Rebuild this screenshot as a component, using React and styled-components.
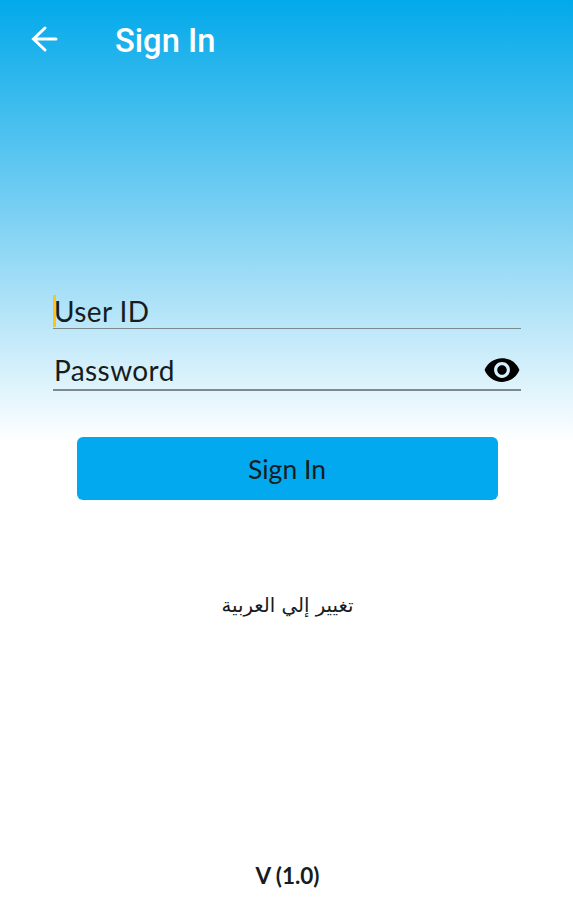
import React, { useState } from "react";
import styled, { createGlobalStyle } from "styled-components";

const colors = {
  primary: "#03a9ee",
  text: "#161c20",
  line: "#7d8b91",
  cursor: "#fcc419",
};

const GlobalStyle = createGlobalStyle`
  * {
    box-sizing: border-box;
  }
  body {
    margin: 0;
    background: white;
  }
`;

const Screen = styled.div`
  height: 900px;
  display: flex;
  flex-direction: column;
  align-items: center;
  overflow: hidden;
  background: linear-gradient(#02a9ea 0px, #7bd0f3 215px, #ffffff 442px);
  font-family: Lato, "Noto Sans", sans-serif;
  color: ${colors.text};
`;

const Header = styled.header`
  width: 100%;
  height: 80px;
  padding: 0 30px;
  display: flex;
  align-items: center;
  gap: 56px;
`;

const BackButton = styled.button`
  display: flex;
  padding: 0;
  background: none;
  border: none;
  color: white;
  cursor: pointer;
`;

const Title = styled.h1`
  margin: 0;
  padding-top: 2px;
  color: white;
  font-family: Roboto, sans-serif;
  font-size: 32.7px;
  font-weight: 500;
  line-height: 40px;
`;

const Form = styled.form`
  width: 468px;
  margin: 214px 0 0 1px;
  display: flex;
  flex-direction: column;
`;

const Field = styled.label`
  height: ${({ $height }) => $height}px;
  padding-top: ${({ $top }) => $top || 0}px;
  display: flex;
  align-items: center;
  border-bottom: ${({ $line }) => $line || 1}px solid ${colors.line};
`;

const Cursor = styled.span`
  width: 3px;
  height: 32px;
  margin-right: -3px;
  background: ${colors.cursor};
`;

const Input = styled.input`
  flex: 1;
  min-width: 0;
  padding: 0 0 0 1px;
  border: none;
  outline: none;
  background: none;
  font-family: inherit;
  font-size: 28px;
  letter-spacing: 0.4px;
  color: ${colors.text};
  &::placeholder {
    color: ${colors.text};
    opacity: 1;
  }
`;

const EyeButton = styled(BackButton)`
  color: black;
`;

const SubmitButton = styled.button`
  width: 421px;
  height: 63px;
  margin: 46px auto 0;
  padding: 0;
  border: none;
  border-radius: 6px;
  background: ${colors.primary};
  color: ${colors.text};
  font-family: inherit;
  font-size: 26.5px;
  cursor: pointer;
`;

const LanguageLink = styled.button`
  margin: 90px 0 0 2px;
  padding: 0;
  border: none;
  background: none;
  color: ${colors.text};
  font-family: "DejaVu Sans", sans-serif;
  font-size: 19.7px;
  line-height: 32px;
  cursor: pointer;
`;

const Version = styled.p`
  margin: auto 0 9px 2px;
  font-size: 22.5px;
  font-weight: 700;
  line-height: 30px;
`;

const App = () => {
  const [showPassword, setShowPassword] = useState(false);

  return (
    <>
      <GlobalStyle />
      <Screen>
        <Header>
          <BackButton aria-label="Back">
            <svg width="29" height="30" viewBox="0 0 29 30" fill="none" stroke="currentColor" strokeWidth="3" strokeLinecap="round">
              <path d="M26 14H4M15 3L3.5 14L15 25" />
            </svg>
          </BackButton>
          <Title>Sign In</Title>
        </Header>
        <Form onSubmit={(e) => e.preventDefault()}>
          <Field $height={35}>
            <Cursor />
            <Input placeholder="User ID" />
          </Field>
          <Field $height={62} $top={22} $line={2}>
            <Input type={showPassword ? "text" : "password"} placeholder="Password" />
            <EyeButton type="button" aria-label="Show password" onClick={() => setShowPassword(!showPassword)}>
              <svg width="38" height="38" viewBox="0 0 24 24" fill="currentColor">
                <path d="M12 4.5C7 4.5 2.73 7.61 1 12c1.73 4.39 6 7.5 11 7.5s9.27-3.11 11-7.5c-1.73-4.39-6-7.5-11-7.5zM12 17c-2.76 0-5-2.24-5-5s2.24-5 5-5 5 2.24 5 5-2.24 5-5 5zm0-8c-1.66 0-3 1.34-3 3s1.34 3 3 3 3-1.34 3-3-1.34-3-3-3z" />
              </svg>
            </EyeButton>
          </Field>
          <SubmitButton type="submit">Sign In</SubmitButton>
        </Form>
        <LanguageLink lang="ar" dir="rtl">تغيير إلي العربية</LanguageLink>
        <Version>V (1.0)</Version>
      </Screen>
    </>
  );
};

export default App;
